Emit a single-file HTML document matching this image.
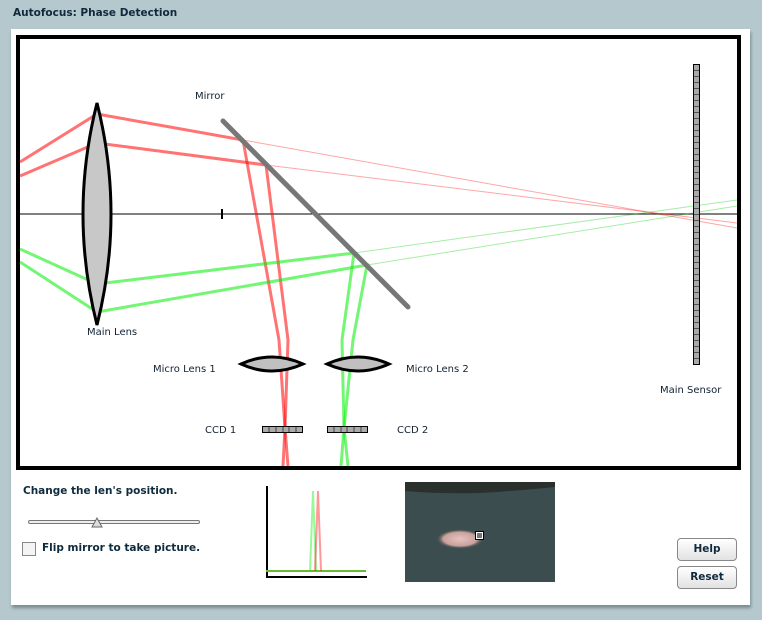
<!DOCTYPE html>
<html><head><style>
body{margin:0;width:762px;height:620px;background:#b5c8cd;font-family:"DejaVu Sans","Liberation Sans",sans-serif;position:relative;overflow:hidden}
.t{position:absolute;font-size:10px;color:#123;}
.b{font-weight:bold;color:#0e2a3c;font-size:10.5px}
.btn{position:absolute;left:677px;width:58px;height:21px;border:1px solid #888;border-radius:4px;background:linear-gradient(#fff,#e2e2e2);font-size:10.5px;font-weight:bold;color:#0e2a3c;text-align:center;line-height:21px}
</style></head><body>
<div class="t b" style="left:13px;top:7px">Autofocus: Phase Detection</div>
<div style="position:absolute;left:11px;top:29px;width:739px;height:576px;background:#fff;box-shadow:1px 3px 3px #7a8c92"></div>
<svg style="position:absolute;left:0;top:0" width="762" height="620">
<rect x="18" y="37" width="721" height="431" fill="none" stroke="#000" stroke-width="4"/>
<line x1="20" y1="214" x2="737" y2="214" stroke="#000" stroke-width="1"/>
<line x1="222" y1="209" x2="222" y2="219" stroke="#000" stroke-width="2"/>
<g fill="none" stroke-opacity="0.55">
<polyline points="20,162 97,114 243,140 279,340 285,428 288,466" stroke="#f00" stroke-width="3"/>
<polyline points="20,176 97,143 266,165 288,340 285,428 283,466" stroke="#f00" stroke-width="3"/>
<polyline points="20,249 97,284 354,253 342,340 344,428 348,466" stroke="#0e0" stroke-width="3"/>
<polyline points="20,262 97,312 367,265 353,340 344,428 341,466" stroke="#0e0" stroke-width="3"/>
</g>
<g stroke-opacity="0.35" stroke-width="1">
<line x1="243" y1="140" x2="737" y2="228" stroke="#f00"/>
<line x1="266" y1="165" x2="737" y2="223" stroke="#f00"/>
<line x1="354" y1="253" x2="737" y2="200" stroke="#0c0"/>
<line x1="367" y1="265" x2="737" y2="206" stroke="#0c0"/>
</g>
<line x1="223" y1="121" x2="408" y2="307" stroke="#777" stroke-width="5" stroke-linecap="round"/>
<path d="M97,103 Q125,214 97,325 Q69,214 97,103Z" fill="#c8c8c8" stroke="#000" stroke-width="3"/>
<path d="M241,364 Q272,350 303,364 Q272,378 241,364Z" fill="#c0c0c0" stroke="#000" stroke-width="3"/>
<path d="M327,364 Q358,350 389,364 Q358,378 327,364Z" fill="#c0c0c0" stroke="#000" stroke-width="3"/>
<g fill="#aaa" stroke="#000" stroke-width="1">
<rect x="262.5" y="426.5" width="40" height="6"/><rect x="327.5" y="426.5" width="40" height="6"/>
<rect x="693.5" y="64.5" width="6" height="300"/>
</g>
<g stroke="#000" stroke-width="0.6">
<path d="M269,426v6M276,426v6M283,426v6M289,426v6M296,426v6M334,426v6M341,426v6M347,426v6M354,426v6M361,426v6"/>
</g>
<path d="M693,70.5h6M693,76.5h6M693,82.5h6M693,88.5h6M693,94.5h6M693,100.5h6M693,106.5h6M693,112.5h6M693,118.5h6M693,124.5h6M693,130.5h6M693,136.5h6M693,142.5h6M693,148.5h6M693,154.5h6M693,160.5h6M693,166.5h6M693,172.5h6M693,178.5h6M693,184.5h6M693,190.5h6M693,196.5h6M693,202.5h6M693,208.5h6M693,214.5h6M693,220.5h6M693,226.5h6M693,232.5h6M693,238.5h6M693,244.5h6M693,250.5h6M693,256.5h6M693,262.5h6M693,268.5h6M693,274.5h6M693,280.5h6M693,286.5h6M693,292.5h6M693,298.5h6M693,304.5h6M693,310.5h6M693,316.5h6M693,322.5h6M693,328.5h6M693,334.5h6M693,340.5h6M693,346.5h6M693,352.5h6M693,358.5h6" stroke="#000" stroke-width="0.5"/>
<rect x="28.5" y="520.5" width="171" height="3" rx="1.5" fill="#eee" stroke="#777"/>
<path d="M92,527 L97,518 L102,527Z" fill="#ddd" stroke="#666"/>
<rect x="22.5" y="542.5" width="13" height="13" fill="#f4f4f4" stroke="#888"/>
<line x1="267" y1="486" x2="267" y2="578" stroke="#000" stroke-width="2"/>
<line x1="266" y1="577" x2="367" y2="577" stroke="#000" stroke-width="2"/>
<line x1="266" y1="571" x2="366" y2="571" stroke="#66bb33" stroke-width="2"/>
<path d="M310,571 L313,491 L316,571" fill="none" stroke="#0e0" stroke-opacity="0.4" stroke-width="2"/>
<path d="M315,571 L318,491 L321,571" fill="none" stroke="#f00" stroke-opacity="0.4" stroke-width="2"/>
<defs><radialGradient id="p" cx="0.5" cy="0.5" r="0.5"><stop offset="0" stop-color="#e8c3bf"/><stop offset="0.7" stop-color="#c9a09c"/><stop offset="1" stop-color="#3a4a4a" stop-opacity="0"/></radialGradient></defs>
<rect x="405" y="482" width="150" height="100" fill="#3b4d4e"/>
<path d="M405,482h150v5q-40,4 -75,6q-40,1 -75,-2Z" fill="#2a302c"/>
<ellipse cx="460" cy="539" rx="24" ry="10" fill="url(#p)"/>
<rect x="475.5" y="531.5" width="8" height="8" fill="#777" stroke="#000"/>
<rect x="476.5" y="532.5" width="6" height="6" fill="none" stroke="#fff"/>
</svg>
<div class="t" style="left:195px;top:91px">Mirror</div>
<div class="t" style="left:87px;top:327px">Main Lens</div>
<div class="t" style="left:153px;top:364px">Micro Lens 1</div>
<div class="t" style="left:406px;top:364px">Micro Lens 2</div>
<div class="t" style="left:205px;top:425px">CCD 1</div>
<div class="t" style="left:397px;top:425px">CCD 2</div>
<div class="t" style="left:660px;top:385px">Main Sensor</div>
<div class="t b" style="left:23px;top:485px">Change the len's position.</div>
<div class="t b" style="left:42px;top:542px">Flip mirror to take picture.</div>
<div class="btn" style="top:538px">Help</div>
<div class="btn" style="top:566px">Reset</div>
</body></html>
